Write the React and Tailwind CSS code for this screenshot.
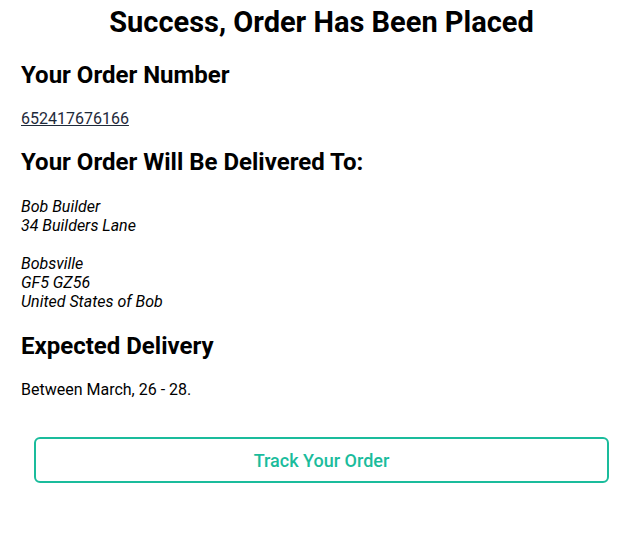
export default function App() {
  return (
    <div className="min-h-screen bg-white text-black font-['Roboto',_'Liberation_Sans',_sans-serif]">
      <div className="px-[21px] pt-[5px] pb-10">
        <h1 className="text-center text-[29px] leading-[35px] font-bold">
          Success, Order Has Been Placed
        </h1>

        <h2 className="mt-[21px] text-[24px] leading-[29px] font-bold">Your Order Number</h2>
        <a href="#" className="mt-[19px] block w-fit text-[16px] leading-[19px] text-[#1e2a3a] underline">
          652417676166
        </a>

        <h2 className="mt-[20px] text-[24px] leading-[29px] font-bold">Your Order Will Be Delivered To:</h2>
        <address className="mt-[20px] text-[16px] leading-[19px] italic">
          Bob Builder
          <br />
          34 Builders Lane
          <br />
          <br />
          Bobsville
          <br />
          GF5 GZ56
          <br />
          United States of Bob
        </address>

        <h2 className="mt-[21px] text-[24px] leading-[29px] font-bold">Expected Delivery</h2>
        <p className="mt-[19px] text-[16px] leading-[19px]">Between March, 26 - 28.</p>

        <div className="mt-[38px] px-[13px]">
          <button className="w-full h-[46px] rounded-[6px] border-2 border-[#1abc9c] bg-white text-[18px] font-medium text-[#1abc9c]">
            Track Your Order
          </button>
        </div>
      </div>
    </div>
  );
}
